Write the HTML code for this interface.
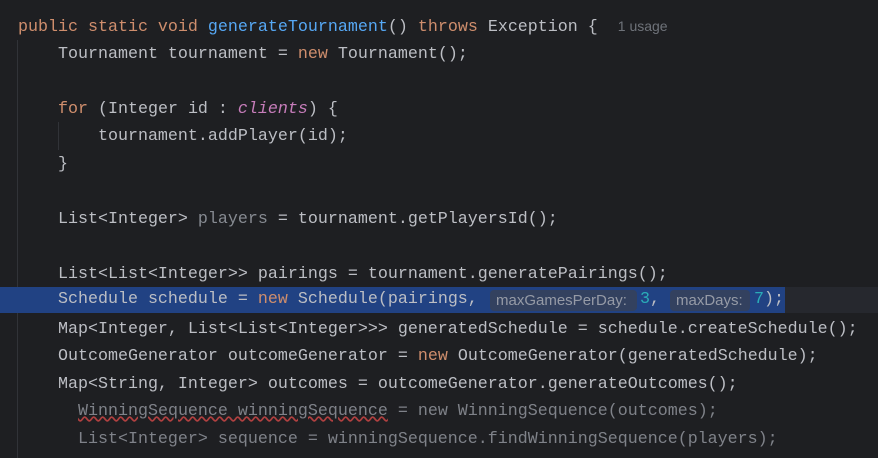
<!DOCTYPE html>
<html><head><style>
body{margin:0;width:878px;height:458px;background:#1e1f22;overflow:hidden;position:relative;font-family:"Liberation Mono",monospace;font-size:16.67px;color:#bcbec4}
.l{position:absolute;left:18px;height:27.5px;line-height:27.5px;white-space:pre;margin-top:1px}
.k{color:#cf8e6d}.f{color:#56a8f5}.c{color:#c77dbb;font-style:italic}.g{color:#868a91}.n{color:#2aacb8}
.d{color:#7f8289}
.hint{position:absolute;top:290px;height:21px;line-height:21px;border-radius:4px;background:#33415f;color:#959aa6;font-family:"Liberation Sans",sans-serif;font-size:15px;padding:0 6px;white-space:pre}
.guide{position:absolute;width:1px;background:#313338}
</style></head><body>
<div class="guide" style="left:17px;top:40px;height:418px"></div>
<div class="guide" style="left:58px;top:122px;height:28px"></div>
<div style="position:absolute;left:0;top:287px;width:785px;height:26px;background:#214283"></div>
<div style="position:absolute;left:785px;top:287px;width:93px;height:26px;background:#26282e"></div>
<div class="l" style="top:12px"><span class="k">public static void </span><span class="f">generateTournament</span>() <span class="k">throws</span> Exception {  <span style="font-family:'Liberation Sans',sans-serif;font-size:14px;color:#6f737a">1 usage</span></div>
<div class="l" style="top:40px">    Tournament tournament = <span class="k">new</span> Tournament();</div>
<div class="l" style="top:94.5px">    <span class="k">for</span> (Integer id : <span class="c">clients</span>) {</div>
<div class="l" style="top:122px">        tournament.addPlayer(id);</div>
<div class="l" style="top:149.5px">    }</div>
<div class="l" style="top:204.5px">    List&lt;Integer&gt; <span class="g">players</span> = tournament.getPlayersId();</div>
<div class="l" style="top:259.5px">    List&lt;List&lt;Integer&gt;&gt; pairings = tournament.generatePairings();</div>
<div class="l" style="top:287px;height:26px;line-height:26px;margin-top:0">    Schedule schedule = <span class="k">new</span> Schedule(pairings,</div>
<div class="hint" style="left:490px;width:135px">maxGamesPerDay:</div>
<div class="l" style="left:640px;top:287px;height:26px;line-height:26px;margin-top:0"><span class="n">3</span>,</div>
<div class="hint" style="left:670px;width:68px">maxDays:</div>
<div class="l" style="left:754px;top:287px;height:26px;line-height:26px;margin-top:0"><span class="n">7</span>);</div>
<div class="l" style="top:314.5px">    Map&lt;Integer, List&lt;List&lt;Integer&gt;&gt;&gt; generatedSchedule = schedule.createSchedule();</div>
<div class="l" style="top:342px">    OutcomeGenerator outcomeGenerator = <span class="k">new</span> OutcomeGenerator(generatedSchedule);</div>
<div class="l" style="top:369.5px">    Map&lt;String, Integer&gt; outcomes = outcomeGenerator.generateOutcomes();</div>
<div class="l d" style="top:397px">      <span style="text-decoration:underline wavy #b04040">WinningSequence winningSequence</span> = new WinningSequence(outcomes);</div>
<div class="l d" style="top:424.5px">      List&lt;Integer&gt; sequence = winningSequence.findWinningSequence(players);</div>
</body></html>
